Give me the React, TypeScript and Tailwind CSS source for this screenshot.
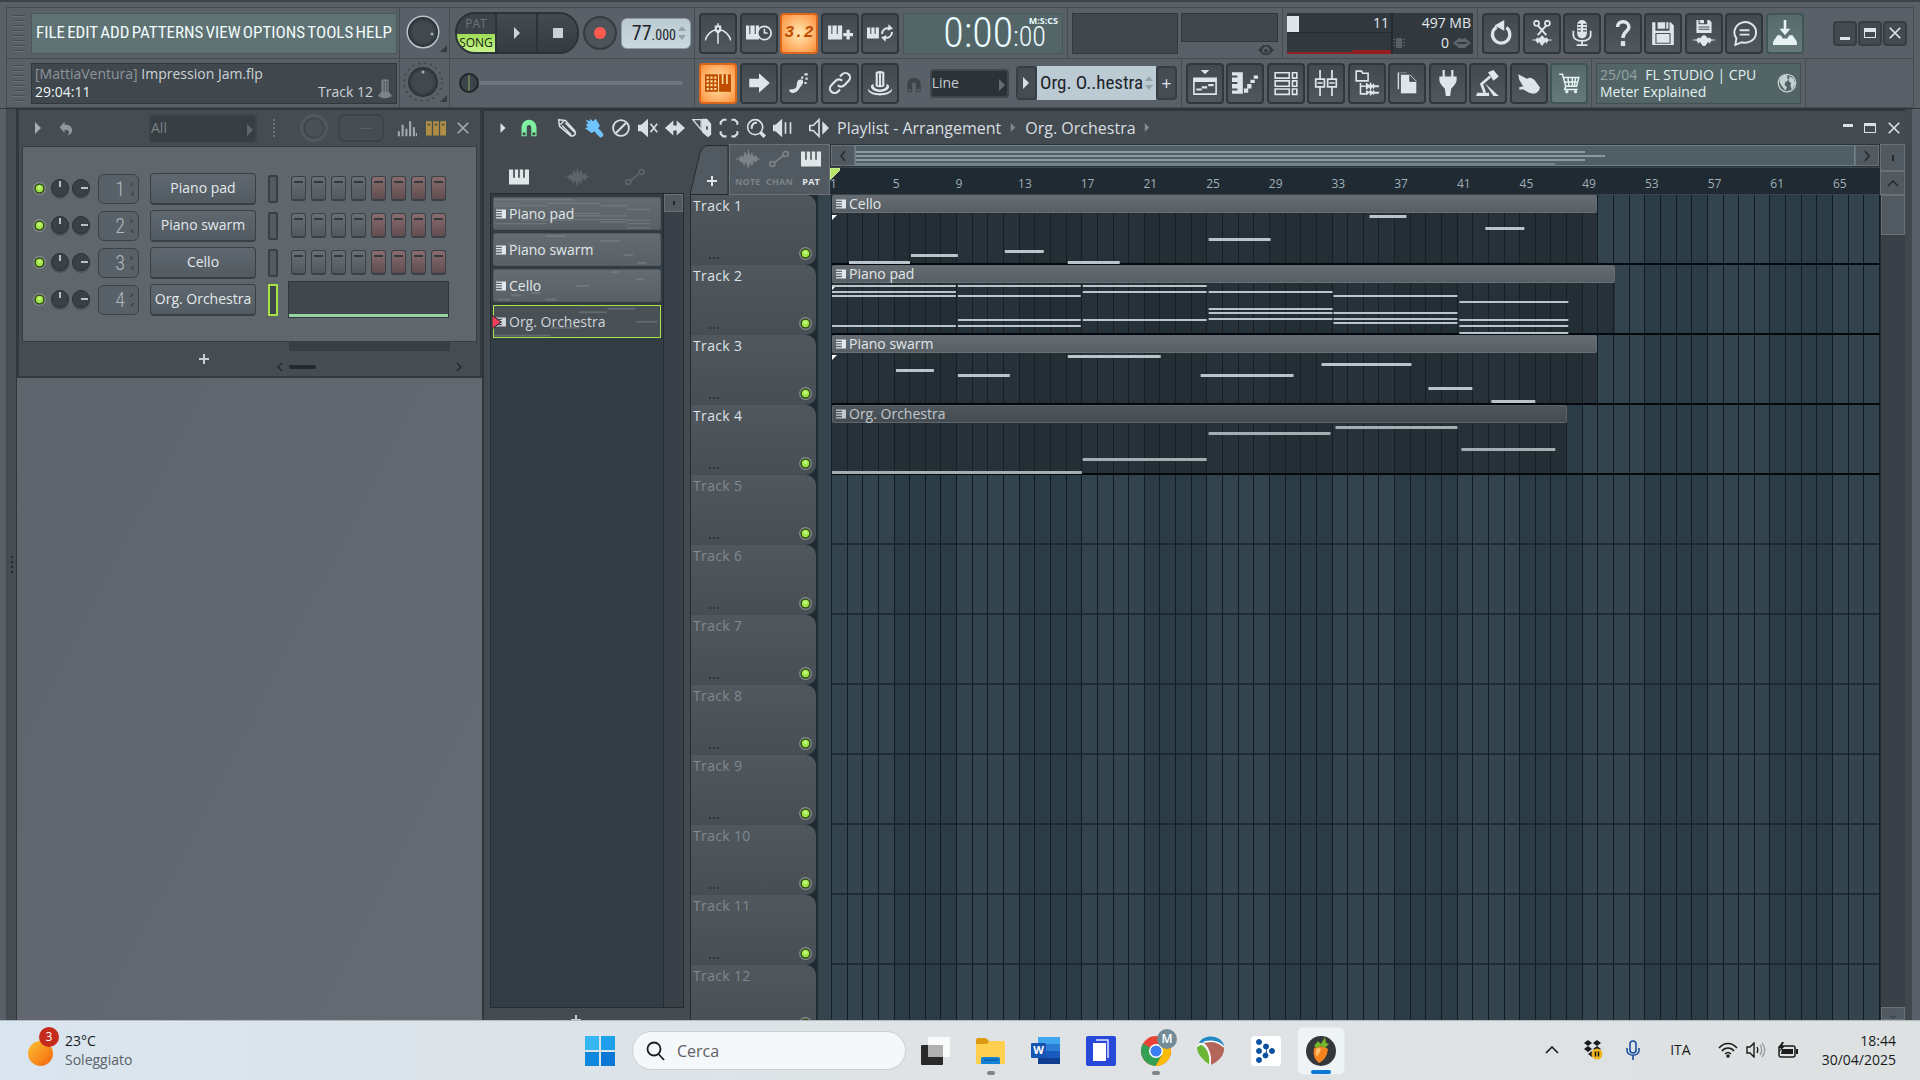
import React from "react";
import clsx from "clsx";

const narrow =
  "font-['Roboto_Condensed','Liberation_Sans_Narrow','DejaVu_Sans_Condensed',sans-serif] whitespace-nowrap";
const sans = "font-['Open_Sans',sans-serif]";

const icons: Record<string, React.ReactNode> = {
  metronome: (
    <>
      <path d="M0 19C2 13 6 10 10 9M24 19C22 13 18 10 14 9" fill="none" stroke="currentColor" strokeWidth="1.500" />
      <path d="M9 5h6v5l-2 2h-2l-2-2zM11.300 3h1.400v19h-1.400z" />
      <path d="M11 7h2v2h-2z" fill="#3c444a" />
    </>
  ),
  keysClock: (
    <>
      <path d="M0 5h3v8h1V5h4v8h1V5h3v13H0z" />
      <circle cx="17" cy="12" r="6.2" fill="#454d53" stroke="currentColor" strokeWidth="1.6" />
      <path d="M17 8v4h3" fill="none" stroke="currentColor" strokeWidth="1.4" />
    </>
  ),
  keysPlus: (
    <path d="M1 5h3v8h1V5h4v8h1V5h4v13H1zM18 9h3v3h3v3h-3v3h-3v-3h-3v-3h3z" />
  ),
  keysLoop: (
    <>
      <path d="M0 7h3v6h1V7h3v6h1V7h3v10H0z" />
      <path d="M14 13a5 5 0 0 1 7-5M23 11a5 5 0 0 1-7 5" fill="none" stroke="currentColor" strokeWidth="1.800" />
      <path d="M20 4l4 4-5 2zM17 20l-4-4 5-2z" />
    </>
  ),
  gridKeys: (
    <>
      <path d="M0 4h12v16H0zM13 4h11v16H13z" />
      <path d="M1.500 6h2v2h-2zM5 6h2v2H5zM8.500 6h2v2h-2zM1.500 9.500h2v2h-2zM5 9.500h2v2H5zM8.500 9.500h2v2h-2zM1.500 13h2v2h-2zM5 13h2v2H5zM8.500 13h2v2h-2zM1.500 16.500h2v2h-2zM5 16.500h2v2H5zM8.500 16.500h2v2h-2zM15.500 4h1.500v9h-1.500zM19.500 4H21v9h-1.500z" fill="#ffe09a" />
    </>
  ),
  arrow: <path d="M3 8h9V3l10 9-10 9v-5H3z" />,
  step: (
    <>
      <path d="M4 18c4 0 6-1 6-5 0-3 2-5 5-4 2 2 0 5-2 7-2 4-5 6-8 5-2-1-3-3-1-3z" />
      <path d="M14 6h2v2h-2zM17 3h3v2h-3zM18 7h2v2h-2zM17 11h2v2h-2z" />
    </>
  ),
  link: (
    <path d="M10 14a4 4 0 0 0 6 0l4-4a4 4 0 0 0-6-6l-2 2M14 10a4 4 0 0 0-6 0l-4 4a4 4 0 0 0 6 6l2-2" fill="none" stroke="currentColor" strokeWidth="2" />
  ),
  knobPot: (
    <>
      <path d="M8 2q4-2 8 0v13q-4 2-8 0z" />
      <path d="M10.500 3v11M13.500 3v11" stroke="#41494f" strokeWidth="1" />
      <path d="M6 13v2c2 4 10 4 12 0v-2c3 1 3 3 1 5-3 3-11 3-14 0-2-2-2-4 1-5zM1 17c3 6 19 6 22 0v2c-3 6-19 6-22 0z" />
    </>
  ),
  playlist: (
    <>
      <path d="M8 0h8l-4 4z" />
      <path d="M1 7h22v16H1zM2.500 11v10.500h19V11z" fillRule="evenodd" />
      <path d="M4 17h5v2H4zM9 15h5v2H9zM15 13h5v2h-5z" />
    </>
  ),
  pianoRoll: (
    <path d="M0 2h10v20H0v-3h5v-2H0v-4h5v-2H0V7h5V5H0zM11 17h4v4h-4zM14 13h4v4h-4zM17 9h4v3h-4zM20 5h4v3h-4z" />
  ),
  channelRack: (
    <path d="M2 2.500h13v5H2zM2 10h13v5H2zM2 17.500h13v5H2zM18 2.500h4v5h-4zM18 10h4v5h-4zM18 17.500h4v5h-4z" fill="none" stroke="currentColor" strokeWidth="1.500" />
  ),
  mixer: (
    <path d="M6.500 0v8M6.500 16v8M17.500 0v8M17.500 16v8M2.500 8.500h8v7h-8zM13.500 8.500h8v7h-8zM4 12h5M15 12h5" fill="none" stroke="currentColor" strokeWidth="1.600" />
  ),
  browser: (
    <>
      <path d="M2 1h5l1 2h5v7H2zM6 12v10h5M6 15h5" fill="none" stroke="currentColor" strokeWidth="1.500" />
      <path d="M11 12h1l2 2 1-3 2 3 1-2 1 2h4v2h-4l-1 2-1-2-2 3-1-3-2 2h-1zM11 19h1l2 1 1-2 2 2 1-2 1 2h4v2h-4l-1 1-1-1-2 2-1-3-2 2h-1z" />
    </>
  ),
  files: <path d="M3 2h9v1H5v15H3zM6 4h9l6 6v12H6zM14.500 4.500v6h6" stroke="#454d53" strokeWidth="0.700" />,
  plug: <path d="M7 0h2v6h6V0h2v6h3v3c0 3-2 5-5 8l-1 7h-4l-1-7c-3-3-5-5-5-8V6h3z" />,
  lamp: (
    <>
      <path d="M12 2l5-2 5 6-5 4z" />
      <path d="M14 6L6 13l3 8" fill="none" stroke="currentColor" strokeWidth="2.500" />
      <path d="M9 12l13 12h-5zM2 21h11v3H1z" />
    </>
  ),
  hand: <path d="M2 4l8 4 3-1 4 2 2 3 3 4c0 3-3 6-6 6l-4-1-5-3-4 0 0-2 4-1-1-1-3-5z" />,
  cart: (
    <>
      <path d="M3 4h3l3 11h10l2-8H7M8 11h12M11 7l1 8M15 7v8M18 7l-1 8M9 15l-1 3h12" fill="none" stroke="currentColor" strokeWidth="1.400" />
      <circle cx="10" cy="20" r="1.500" />
      <circle cx="18" cy="20" r="1.500" />
    </>
  ),
  undo: (
    <>
      <path d="M8 6.500a8 8 0 1 0 9 .5" fill="none" stroke="currentColor" strokeWidth="3" />
      <path d="M6 5l9-5v10z" />
    </>
  ),
  cut: (
    <>
      <path d="M8 5l8 9M16 5l-8 9" stroke="currentColor" strokeWidth="1.800" />
      <circle cx="7" cy="3" r="2.300" fill="none" stroke="currentColor" strokeWidth="1.600" />
      <circle cx="17" cy="3" r="2.300" fill="none" stroke="currentColor" strokeWidth="1.600" />
      <path d="M3 18h3l2-2 1 1 3-3 3 3 1-1 2 2h3v1h-3l-2 3-1-2-3 4-3-4-1 2-2-3H3z" />
    </>
  ),
  mic: (
    <>
      <rect x="7.500" y="0" width="9" height="17" rx="4.500" />
      <path d="M4 10v4c0 7 16 7 16 0v-4M12 19v4M7 23.200h10" fill="none" stroke="currentColor" strokeWidth="1.600" />
      <path d="M8 4h3M13 4h3M8 7h3M13 7h3M8 10h3M13 10h3" stroke="#454d53" strokeWidth="1" />
    </>
  ),
  help: (
    <>
      <path d="M7 6.500c0-7 10.500-6 10.500 0 0 4-5.500 4-5.500 10" fill="none" stroke="currentColor" strokeWidth="3.200" />
      <path d="M10 19.500h4V24h-4z" />
    </>
  ),
  save: <path d="M2 2h3v8h13V2h1l3 3v18H2zM7 2h7v6H7zM15 2h2v6h-2zM5 12v10h14V12z M6 13h12v8H6z" fillRule="evenodd" />,
  saveWave: (
    <>
      <path d="M5 0h2v4h8V0h2l2 2v10H5zM8 0h4v3H8zM7 6h10v1H7zM7 8h10v1H7z" fillRule="evenodd" />
      <path d="M2 18h3l2-2 1 1 3-3h2l3 3 1-1 2 2h3v1h-3l-2 3-1-2-3 4h-2l-3-4-1 2-2-3H2z" />
    </>
  ),
  chat: (
    <path d="M4 23l1-6A10 9.500 0 1 1 10 20.500zM8 9.500h9M8 13.500h9" fill="none" stroke="currentColor" strokeWidth="1.800" />
  ),
  download: (
    <path d="M10.800 0h2.400v8H17l-5 6-5-6h3.800zM5 14h3l2 3h4l2-3h3l4 6v3H1v-3z" />
  ),
  undoArrow: <path d="M9 1v5c8 0 12 3 12 9 0 4-3 7-8 8 5-3 4-9-4-9v5L1 10z" />,
  bars: <path d="M1 16h2.500v6H1zM5.500 8H8v14H5.500zM10 13h2.500v9H10zM14.500 4H17v18h-2.500zM19 11h2.500v11H19zM22.500 18H24v4h-1.500z" />,
  cells: <path d="M0 4h7v17H0zM8.500 4h7v17h-7zM17 4h7v17h-7zM2 7v2h3V7zM10.500 7v2h3V7zM19 7v2h3V7z" fillRule="evenodd" />,
  close: <path d="M3 3l18 18M21 3L3 21" stroke="currentColor" strokeWidth="3" />,
  magnet: (
    <path d="M2 23V11a10 10 0 0 1 20 0v12h-7V11a3 3 0 0 0-6 0v12zM3.500 18v3.500h4V18zM16.500 18v3.500h4V18z" fillRule="evenodd" />
  ),
  pencil: (
    <path d="M2 2l8 1 11 12c3 4-1 8-5 6L3 10zM6 9l11 11M8 4L4 8M10 6l11 11" fill="none" stroke="currentColor" strokeWidth="1.800" />
  ),
  paint: (
    <path d="M2 2l5 2 0-3 4 3 3-3 5 8-2 4 2 1 4 5c1 3-2 5-4 4l-5-5-1-2-4 2-8-6 4-1-3-3 3-1z" />
  ),
  deny: (
    <>
      <circle cx="12" cy="12" r="9.500" fill="none" stroke="currentColor" strokeWidth="2.200" />
      <path d="M6 18L18 6" stroke="currentColor" strokeWidth="2.500" />
    </>
  ),
  mute: (
    <>
      <path d="M0 8h4l8-7v22l-8-7H0z" />
      <path d="M15 7l8 10M23 7l-8 10" stroke="currentColor" strokeWidth="2" />
    </>
  ),
  slip: <path d="M0 12l10-9v6h4V3l10 9-10 9v-6h-4v6z" />,
  slice: (
    <>
      <path d="M1 2h10v12z" fill="none" stroke="currentColor" strokeWidth="1.600" />
      <path d="M12 1h6l5 6v13l-4 3-7-6zM17 10v4h2v-4z" fillRule="evenodd" />
    </>
  ),
  selectBox: (
    <path d="M2 8V5l3-3h4M15 2h4l3 3v3M22 16v3l-3 3h-4M9 22H5l-3-3v-3" fill="none" stroke="currentColor" strokeWidth="2.500" />
  ),
  magnify: (
    <>
      <circle cx="11" cy="11" r="9" fill="none" stroke="currentColor" strokeWidth="2" />
      <path d="M7 13c-1-5 3-8 6-7" fill="none" stroke="currentColor" strokeWidth="2.500" />
      <path d="M16 19l3-3 5 5-3 3z" />
    </>
  ),
  playback: <path d="M0 8h3l8-7v22l-8-7H0zM14 5h2v14h-2zM20 5h2v14h-2z" />,
  speaker: (
    <>
      <path d="M1 9h4l7-7v20l-7-7H1z" fill="none" stroke="currentColor" strokeWidth="2" />
      <path d="M16 4l8 8-8 8z" />
    </>
  ),
  keys: <path d="M0 3h5v10h2V3h4v10h2V3h4v10h2V3h5v18H0z" />,
  wave: (
    <path d="M0 11.500h3l2-3 2 2 2-6 2 4 1.500-7L14 9l2-4 2 5 2-2 2 3.500h2v1h-2l-2 3-2-2-2 6-2-4-1.500 7L10 15l-2 4-2-5-1 2-2-3.500H0z" />
  ),
  auto: (
    <>
      <circle cx="4" cy="18" r="3" fill="none" stroke="currentColor" strokeWidth="2" />
      <circle cx="20" cy="6" r="3" fill="none" stroke="currentColor" strokeWidth="2" />
      <path d="M7 16L17 8" stroke="currentColor" strokeWidth="2" />
    </>
  ),
  plus: <path d="M10 2h4v8h8v4h-8v8h-4v-8H2v-4h8z" />,
  clipKeys: (
    <path d="M0 1h24v22H0v-3h14v-4H0v-3h14v-3H0V7h14V4H0z" />
  ),
  globe: (
    <>
      <circle cx="12" cy="12" r="10.500" fill="none" stroke="currentColor" strokeWidth="1.500" />
      <path d="M4 6l5-4 4 1-1 3 2 2-4 3-1 3 3 3-2 4-4-5-3-5zM15 4l5 3 2 6-4 7-2-5 1-3-3-2z" />
    </>
  ),
};

const Icon = ({ name, className = "size-6" }: { name: string; className?: string }) => (
  <svg viewBox="0 0 24 24" fill="currentColor" className={clsx("shrink-0", className)} aria-hidden="true">
    {icons[name]}
  </svg>
);

const Tri = ({ className }: { className?: string }) => (
  <svg viewBox="0 0 6 12" fill="currentColor" className={clsx("h-3 w-[6px] shrink-0", className)} aria-hidden="true">
    <path d="M0 0l6 6-6 6z" />
  </svg>
);

const ToolButton = ({ icon, tone = "dark", children }: { icon: string; tone?: string; children?: React.ReactNode }) => (
  <button
    aria-label={icon}
    className={clsx(
      "flex h-[41px] w-[38px] shrink-0 items-center justify-center rounded-sm border-2",
      tone === "dark" && "border-[#30383e] bg-linear-to-b from-[#42494f] to-[#50585e] text-[#dfe5e8]",
      tone === "hot" && "border-[#d9681c] bg-radial from-[#ffe9b0] to-[#ff8d33] text-[#c04c00]",
      tone === "teal" && "border-[#3f5558] bg-linear-to-b from-[#566a6c] to-[#66797a] text-[#e6f3f2]"
    )}
  >
    {children ?? <Icon name={icon} className="size-[26px]" />}
  </button>
);

const Grip = () => (
  <div className="flex w-6 shrink-0 flex-col items-center gap-[3px]">
    {Array.from({ length: 8 }, (_, i) => (
      <span key={i} className="h-[2px] w-3 border-t border-[#454c52] bg-[#687077]" />
    ))}
  </div>
);

const Cell = ({ className, children }: { className?: string; children?: React.ReactNode }) => (
  <div className={clsx("flex h-full shrink-0 items-center border-r border-[#454c52]", className)}>{children}</div>
);

const MainKnob = ({ ring }: { ring: boolean }) => (
  <svg viewBox="0 0 44 44" className="size-11" aria-hidden="true">
    {ring ? (
      <circle cx="20" cy="21" r="15.500" fill="none" stroke="#b9c8d0" strokeWidth="2" />
    ) : (
      <circle cx="20" cy="21" r="19" fill="none" stroke="#41484e" strokeWidth="2" strokeDasharray="2 4" />
    )}
    <circle cx="20" cy="21" r="14" fill="#394147" stroke="#2d343a" strokeWidth="2" />
    <circle cx="20" cy="21" r="11" fill="#41494f" />
    <circle cx={ring ? 29 : 20} cy={ring ? 23 : 11} r="1.500" fill="#9fb0b8" />
    <path d="M44 34v7h-7z" fill="#353c42" />
  </svg>
);

const menus = ["FILE", "EDIT", "ADD", "PATTERNS", "VIEW", "OPTIONS", "TOOLS", "HELP"];

const Toolbar = () => (
  <header className="shrink-0 border-t-2 border-[#3b4248] bg-[#596067] px-[6px] pt-[5px]">
    <div className="flex h-[51px] items-center border border-b-0 border-[#454c52]">
      <Cell className="w-[393px]">
        <Grip />
        <nav className={clsx("flex h-[41px] w-[366px] items-center justify-between border border-[#49595b] bg-[#5f7274] px-1 text-[17px] text-[#f0fbfb]", narrow)}>
          {menus.map((m) => (
            <button key={m}>{m}</button>
          ))}
        </nav>
      </Cell>
      <Cell className="w-[50px] justify-center">
        <MainKnob ring />
      </Cell>
      <Cell className="w-[245px] gap-1 pl-[5px]">
        <div className="flex h-[42px] w-[124px] overflow-hidden rounded-[20px] border-2 border-[#2c3338] bg-[#3c444a]">
          <div className="flex w-[38px] flex-col text-center text-xs">
            <button className={clsx("h-5 text-[#6b747a]", sans)}>PAT</button>
            <button className={clsx("flex-1 bg-linear-to-b from-[#9fdc55] to-[#c6f58a] text-[#20280f]", sans)}>SONG</button>
          </div>
          <button aria-label="Play" className="flex flex-1 items-center justify-center border-l-2 border-[#2c3338] bg-linear-to-b from-[#434b51] to-[#343b41]">
            <Tri className="text-[#cfd6da]" />
          </button>
          <button aria-label="Stop" className="flex flex-1 items-center justify-center border-l-2 border-[#2c3338] bg-linear-to-b from-[#434b51] to-[#343b41]">
            <span className="size-[10px] bg-[#c9cfd4]" />
          </button>
        </div>
        <button aria-label="Record" className="flex h-[34px] w-[34px] items-center justify-center rounded-full border-2 border-[#343b41] bg-[#4c545a]">
          <span className="size-3 rounded-full bg-[#ff5a50]" />
        </button>
        <div className="flex h-[31px] w-[70px] items-center justify-end rounded-md border border-[#8d9ca4] bg-linear-to-b from-[#bccbd3] to-[#cbd8de] pr-1">
          <span className={clsx("text-xl text-[#1d2429]", narrow)}>77</span>
          <span className={clsx("pt-1 text-sm text-[#1d2429]", narrow)}>.000</span>
          <svg viewBox="0 0 8 14" className="ml-[2px] h-[14px] w-2" fill="#93a2aa"><path d="M4 0l4 5H0zM4 14l4-5H0z" /></svg>
        </div>
      </Cell>
      <Cell className="w-[373px] justify-between px-1">
        <div className="flex w-[200px] justify-between">
          <ToolButton icon="metronome" />
          <ToolButton icon="keysClock" />
          <ToolButton icon="count in" tone="hot">
            <span className="font-['Liberation_Mono',monospace] text-base font-bold italic">3.2</span>
          </ToolButton>
          <ToolButton icon="keysPlus" />
          <ToolButton icon="keysLoop" />
        </div>
        <div className={clsx("relative flex h-[41px] w-[160px] items-center justify-end border border-[#455759] bg-[#536567] pr-4 text-[#eafcff]", narrow)}>
          <span className="text-[42px] leading-10 font-light">0:00</span>
          <span className="pt-2 text-[28px] leading-8 font-light">:00</span>
          <span className={clsx("absolute top-0 right-1 text-[9px] font-bold", sans)}>M:S:CS</span>
        </div>
      </Cell>
      <Cell className="w-[215px] items-start gap-[3px] px-1 pt-[5px]">
        <div className="h-[41px] w-[107px] border border-[#31383e] bg-[#40474d]" />
        <div className="flex flex-col items-end">
          <div className="h-[29px] w-[97px] border border-[#31383e] bg-[#40474d]" />
          <svg viewBox="0 0 16 12" className="mr-1 mt-[2px] h-3 w-4" fill="#353c42">
            <path d="M0 6l5-5h6l5 5-5 5H5z" />
            <circle cx="8" cy="6" r="3.500" fill="#596067" />
            <circle cx="8" cy="7" r="2" />
          </svg>
        </div>
      </Cell>
      <Cell className="w-[195px] px-1">
        <div className={clsx("flex h-[41px] w-[186px] bg-[#242b31] text-sm leading-5 text-[#e3eaee]", sans)}>
          <div className="relative w-[106px] border-r-2 border-[#242b31] bg-[#31383e]">
            <div className="flex h-5 justify-between border-b border-[#242b31] pr-[2px]">
              <span className="mt-[3px] h-4 w-3 bg-[#dfe6ea]" />
              <span>11</span>
            </div>
            <svg viewBox="0 0 106 4" className="absolute bottom-0 left-0 h-1 w-full">
              <path d="M0 3h66l2-2h38M68 3h38" stroke="#b51616" strokeWidth="1.500" fill="none" />
            </svg>
          </div>
          <div className="relative flex-1 bg-[#31383e] pr-[2px] text-right">
            <div>497 MB</div>
            <div className="flex items-center justify-between">
              <svg viewBox="0 0 12 10" className="h-[10px] w-3" fill="#576067">
                <path d="M3 0h6v10H3zM0 1h2v1H0zM0 4h2v1H0zM0 7h2v1H0zM10 1h2v1h-2zM10 4h2v1h-2zM10 7h2v1h-2z" />
              </svg>
              <span className="flex items-center gap-1">
                0
                <svg viewBox="0 0 18 12" className="h-3 w-[18px]" fill="#5d666d">
                  <path d="M0 6l6-5 3 1 3-1 6 5-6 5H6zM3 6l3 1h6l3-1-3-1H6z" fillRule="evenodd" />
                </svg>
              </span>
            </div>
          </div>
        </div>
      </Cell>
      <div className="flex flex-1 items-center justify-between pr-[6px] pl-1">
        <div className="flex w-[322px] justify-between">
          {["undo", "cut", "mic", "help", "save", "saveWave", "chat"].map((n) => (
            <ToolButton key={n} icon={n} />
          ))}
          <ToolButton icon="download" tone="teal" />
        </div>
        <div className="flex gap-px text-[#dfe5e8]">
          <button aria-label="Minimize" className="flex h-[25px] w-6 items-end justify-center rounded-sm border-2 border-[#363e44] bg-[#434b51] pb-1"><span className="h-[3px] w-[10px] bg-current" /></button>
          <button aria-label="Maximize" className="flex h-[25px] w-6 items-center justify-center rounded-sm border-2 border-[#363e44] bg-[#434b51]"><span className="h-[10px] w-3 border border-t-4 border-current" /></button>
          <button aria-label="Close" className="flex h-[25px] w-6 items-center justify-center rounded-sm border-2 border-[#363e44] bg-[#434b51]"><Icon name="close" className="size-[14px]" /></button>
        </div>
      </div>
    </div>
    <div className="flex h-[50px] items-center border border-[#454c52]">
      <Cell className="w-[393px]">
        <Grip />
        <div className={clsx("flex h-[41px] w-[366px] items-end justify-between border border-[#30373d] bg-[#40474d] px-[3px] text-sm leading-[18px] text-[#ccd3d8]", sans)}>
          <div className="pb-[2px]">
            <div><span className="text-[#8d959b]">[MattiaVentura]</span> Impression Jam.flp</div>
            <div className="text-[#eef3f5]">29:04:11</div>
          </div>
          <div className="flex items-end gap-1">
            <span className="pb-[2px]">Track 12</span>
            <svg viewBox="0 0 18 22" className="mb-1 h-5 w-4" fill="#7c848a"><path d="M5 1q4-2 8 0v13l4 5q-8 5-16 0l4-5z" /><path d="M8 2v12M11 2v12" stroke="#40474d" /></svg>
          </div>
        </div>
      </Cell>
      <Cell className="w-[50px] justify-center">
        <MainKnob ring={false} />
      </Cell>
      <Cell className="w-[245px] px-[9px]">
        <input
          type="range"
          aria-label="Song position"
          defaultValue={0}
          className="h-6 w-[224px] appearance-none bg-transparent [&::-webkit-slider-runnable-track]:h-1 [&::-webkit-slider-runnable-track]:rounded-sm [&::-webkit-slider-runnable-track]:bg-[#6e767d] [&::-webkit-slider-thumb]:-mt-2 [&::-webkit-slider-thumb]:size-5 [&::-webkit-slider-thumb]:appearance-none [&::-webkit-slider-thumb]:rounded-full [&::-webkit-slider-thumb]:border-2 [&::-webkit-slider-thumb]:border-[#1f262b] [&::-webkit-slider-thumb]:bg-linear-to-r [&::-webkit-slider-thumb]:from-[#3c444a] [&::-webkit-slider-thumb]:from-45% [&::-webkit-slider-thumb]:via-[#a8dc50] [&::-webkit-slider-thumb]:to-[#3c444a] [&::-webkit-slider-thumb]:to-55%"
        />
      </Cell>
      <Cell className="w-[487px] justify-between px-1">
        <div className="flex w-[200px] justify-between">
          <ToolButton icon="gridKeys" tone="hot" />
          <ToolButton icon="arrow" />
          <ToolButton icon="step" />
          <ToolButton icon="link" />
          <ToolButton icon="knobPot" />
        </div>
        <Icon name="magnet" className="mt-1 size-4 text-[#3c434a]" />
        <div className="relative">
          <select aria-label="Snap" className={clsx("h-[29px] w-[79px] appearance-none rounded-sm border-2 border-[#3f464c] bg-[#2c3237] text-sm text-[#c6cdd1]", sans)}>
            <option>Line</option>
          </select>
          <Tri className="absolute top-[10px] right-1 h-2 w-1 text-[#656d73]" />
        </div>
        <div className="flex h-[34px] text-[#d8dee2]">
          <button aria-label="Pattern menu" className="flex w-[21px] items-center justify-center rounded-sm border-2 border-[#363e44] bg-[#454d53]"><Tri className="h-2 w-1" /></button>
          <div className={clsx("flex w-[119px] items-center justify-between bg-[#bccbd3] px-[3px] text-[19px] text-[#1d2429]", narrow)}>
            Org. O..hestra
            <svg viewBox="0 0 8 14" className="h-[14px] w-2 shrink-0" fill="#93a2aa"><path d="M4 0l4 5H0zM4 14l4-5H0z" /></svg>
          </div>
          <button className="w-[21px] rounded-sm border-2 border-[#363e44] bg-[#454d53] text-lg leading-none">+</button>
        </div>
      </Cell>
      <Cell className="w-[410px] pl-1">
        <div className="flex w-[402px] justify-between">
          {["playlist", "pianoRoll", "channelRack", "mixer", "browser", "files", "plug", "lamp", "hand"].map((n) => (
            <ToolButton key={n} icon={n} />
          ))}
          <ToolButton icon="cart" tone="teal" />
        </div>
      </Cell>
      <Cell className="w-[214px] px-1">
        <div className={clsx("flex h-[41px] w-[206px] items-center justify-between border border-[#3f5153] bg-[#536466] px-[3px] text-sm leading-[17px] text-[#e2f1f1]", sans)}>
          <div>
            <div><span className="mr-2 text-[#94a5a6]">25/04</span>FL STUDIO | CPU</div>
            <div>Meter Explained</div>
          </div>
          <Icon name="globe" className="size-5 text-[#c2d0d0]" />
        </div>
      </Cell>
    </div>
  </header>
);

const Led = () => (
  <svg viewBox="0 0 13 13" className="size-[13px] shrink-0" aria-hidden="true">
    <circle cx="6.500" cy="6.500" r="5.800" fill="#2f4a14" stroke="#868f94" strokeWidth="1.200" />
    <circle cx="6.500" cy="6.500" r="3.700" fill="#a0e64a" />
    <circle cx="6.500" cy="5.500" r="1.800" fill="#c4fa7c" />
  </svg>
);

const SmallKnob = ({ pan }: { pan?: boolean }) => (
  <svg viewBox="0 0 20 22" className="h-[22px] w-5 shrink-0" aria-hidden="true">
    <circle cx="10" cy="12" r="9" fill="#4a5258" />
    <circle cx="10" cy="10" r="8.500" fill="#394147" stroke="#2b3237" />
    {pan ? <path d="M10 10h7" stroke="#b8c1c6" strokeWidth="2" /> : <path d="M10 3v6" stroke="#b8c1c6" strokeWidth="2" />}
  </svg>
);

const channels = ["Piano pad", "Piano swarm", "Cello", "Org. Orchestra"];

const ChannelRack = () => (
  <section className="border-2 border-t border-[#33393f] bg-[#454d53]">
    <div className="flex h-9 items-center text-[#8e979d]">
      <Tri className="ml-4 text-[#a4adb2]" />
      <Icon name="undoArrow" className="ml-[18px] size-[15px]" />
      <div className="relative ml-[75px]">
        <select aria-label="Channel filter" className={clsx("h-[29px] w-[108px] appearance-none rounded-sm border-2 border-[#3d4449] bg-[#373e42] text-sm text-[#798186]", sans)}>
          <option>All</option>
        </select>
        <Tri className="absolute top-[10px] right-1 h-2 w-1 text-[#5e676d]" />
      </div>
      <span className="ml-4 h-[18px] border-l-2 border-dotted border-[#6c757b]" />
      <svg viewBox="0 0 30 30" className="ml-6 size-[30px]"><circle cx="15" cy="15" r="12.500" fill="none" stroke="#515960" strokeWidth="3" /><circle cx="15" cy="15" r="9.500" fill="#4a5258" stroke="#394047" /></svg>
      <div className="ml-[9px] flex h-7 w-[46px] items-center justify-end rounded-md border-2 border-[#3c444a] pr-[10px] text-xs text-[#5e676d]">---</div>
      <Icon name="bars" className="ml-[13px] size-5 text-[#a2abb0]" />
      <Icon name="cells" className="ml-[9px] size-5 text-[#b08d45]" />
      <Icon name="close" className="ml-[10px] size-[14px] text-[#a4adb2]" />
    </div>
    <div className="mx-[3px] flex h-[196px] flex-col justify-center gap-[5px] border border-[#363d43] bg-[#5f676d] pl-[10px]">
      {channels.map((name, i) => (
        <div key={name} className="flex h-8 items-center">
          <Led />
          <span className="ml-1 flex gap-px">
            <SmallKnob />
            <SmallKnob pan />
          </span>
          <div className={clsx("ml-[7px] flex h-[30px] w-[41px] items-center justify-end gap-1 rounded-md border border-[#3b4349] bg-[#596168] pr-1 text-xl font-light text-[#b0b8bd]", narrow)}>
            {i + 1}
            <svg viewBox="0 0 4 14" className="ml-px h-[14px] w-1" fill="none" stroke="#363e44"><path d="M0 0l3 2-3 2M4 10l-3 2 3 2" /></svg>
          </div>
          <button className={clsx("ml-[11px] h-8 w-[106px] rounded-sm border border-b-2 border-[#384046] bg-linear-to-b from-[#60686f] to-[#535b62] text-sm text-[#e3e9ec]", sans)}>{name}</button>
          <span className={clsx("ml-3 w-[10px] border-2", i === 3 ? "h-8 border-[#a6e343] bg-[#3e464c]" : "h-7 rounded-xs border-[#373f45] bg-[#535b61]")} />
          {i === 3 ? (
            <div className="ml-[10px] h-[37px] w-[161px] border border-[#30383e] bg-[#40474d] pt-8">
              <div className="h-[3px] bg-[#97d3a2]" />
            </div>
          ) : (
            <div className="ml-[13px] flex gap-[5px]">
              {Array.from({ length: 8 }, (_, s) => (
                <button
                  key={s}
                  aria-label={`${name} step ${s + 1}`}
                  className={clsx("flex h-[25px] w-[15px] justify-center rounded-[3px] border border-b-2 border-[#394147] bg-linear-to-b pt-1", s < 4 ? "from-[#687076] to-[#525a60]" : "from-[#8a6c6d] to-[#614d50]")}
                >
                  <span className="h-[2px] w-[9px] bg-[#333a3f]" />
                </button>
              ))}
            </div>
          )}
        </div>
      ))}
    </div>
    <div className="flex h-[34px] items-center">
      <button aria-label="Add channel" className="ml-[179px]"><Icon name="plus" className="size-3 text-[#c8ced2]" /></button>
      <div className="relative ml-auto flex h-full w-[202px] flex-col pr-[30px] pl-[11px]">
        <div className="h-[9px] bg-[#373e44]" />
        <div className="mt-[14px] h-1 w-[27px] rounded-full bg-[#23292e]" />
        <svg viewBox="0 0 6 10" className="absolute bottom-1 -left-px h-[10px] w-[6px]" fill="none" stroke="#23292e" strokeWidth="1.500"><path d="M5 1L1 5l4 4" /></svg>
        <svg viewBox="0 0 6 10" className="absolute right-[18px] bottom-1 h-[10px] w-[6px]" fill="none" stroke="#23292e" strokeWidth="1.500"><path d="M1 1l4 4-4 4" /></svg>
      </div>
    </div>
  </section>
);

// x, width and y of each note inside a clip, on a 1049 x 70 lane
type Note = [number, number, number];
type Clip = { name: string; width: number; thick: number; notes: Note[]; looped: boolean };

const clips: Clip[] = [
  {
    name: "Cello", width: 766, thick: 3, looped: true,
    notes: [[17, 62, 66], [79, 48, 59], [173, 40, 55], [236, 53, 66], [377, 63, 43], [538, 38, 20], [654, 40, 32]],
  },
  {
    name: "Piano pad", width: 784, thick: 2, looped: true,
    notes: [
      [0, 125, 20], [0, 125, 26], [0, 125, 30], [0, 125, 60],
      [126, 124, 20], [126, 124, 30], [126, 124, 54], [126, 124, 60],
      [251, 125, 20], [251, 125, 26], [251, 125, 54],
      [377, 125, 26], [377, 125, 43], [377, 125, 47], [377, 125, 53],
      [502, 125, 30], [502, 125, 47], [502, 125, 53], [502, 125, 57],
      [628, 110, 36], [628, 110, 54], [628, 110, 60], [628, 110, 67],
    ],
  },
  {
    name: "Piano swarm", width: 766, thick: 3, looped: true,
    notes: [[64, 39, 34], [126, 53, 39], [236, 94, 20], [369, 94, 39], [490, 91, 28], [597, 45, 52], [660, 45, 65]],
  },
  {
    name: "Org. Orchestra", width: 736, thick: 3, looped: false,
    notes: [[0, 251, 66], [251, 125, 53], [377, 123, 27], [504, 123, 21], [630, 95, 43]],
  },
];

const ClipNotes = ({ clip, className, top = 0 }: { clip: Clip; className?: string; top?: number }) => (
  <svg viewBox={`0 ${top} ${clip.width} ${70 - top}`} preserveAspectRatio="none" className={className} fill="currentColor" aria-hidden="true">
    {clip.notes.map(([x, w, y], i) => (
      <rect key={i} x={x} y={y} width={w - 1} height={clip.thick} />
    ))}
  </svg>
);

const ClipView = ({ clip }: { clip: Clip }) => (
  <div className="relative h-full bg-[#1d2328]/55" style={{ width: `${(clip.width / 1049) * 100}%` }}>
    <div className={clsx("flex h-[18px] items-center gap-[3px] rounded-xs border border-[#6a7278]/60 pl-[3px] text-sm leading-none", sans, clip.looped ? "bg-linear-to-b from-[#656c72] to-[#575f65] text-[#e1e7ea]" : "bg-linear-to-b from-[#4e555b] to-[#444b51] text-[#c2c9cd]")}>
      <Icon name="clipKeys" className="h-3 w-[10px]" />
      {clip.name}
    </div>
    {clip.looped && (
      <svg viewBox="0 0 5 5" className="absolute top-5 left-0 size-[5px]"><path d="M0 0h5L0 5z" fill="#fff" /></svg>
    )}
    <ClipNotes clip={clip} className={clsx("absolute top-0 left-0 h-[70px] w-full", clip.looped ? "text-[#b9c5ca]" : "text-[#a3adb2]")} />
  </div>
);

const pickerOrder = [clips[1], clips[2], clips[0], clips[3]];

const PatternPicker = () => (
  <div className="flex w-[206px] shrink-0 flex-col pl-[6px]">
    <div className="flex h-[49px] items-center gap-9 pt-4 pl-[19px] text-[#5d656b]">
      <Icon name="keys" className="size-5 text-[#e0e5e8]" />
      <Icon name="wave" className="size-6" />
      <Icon name="auto" className="size-5" />
    </div>
    <div className="flex w-[194px] flex-1 border border-[#252c31] bg-[#323c45]">
      <ul className="flex flex-1 flex-col gap-[3px] px-[2px] pt-[3px]">
        {pickerOrder.map((clip) => (
          <li
            key={clip.name}
            className={clsx(
              "relative flex h-[33px] items-center gap-[3px] border pl-[2px] text-sm",
              sans,
              clip.looped ? "rounded-xs border-[#535b61] bg-linear-to-b from-[#646c72] to-[#596167] text-[#e1e7ea]" : "border-[#a6e343] bg-[#495056] text-[#d0d6da]"
            )}
          >
            <ClipNotes clip={clip} top={18} className="absolute inset-0 h-full w-full text-[#8c969c]/40" />
            <Icon name="clipKeys" className="relative h-3 w-[10px]" />
            <span className="relative">{clip.name}</span>
            {!clip.looped && (
              <svg viewBox="0 0 9 14" className="absolute -left-[2px] h-[14px] w-[9px]"><path d="M0 0l9 7-9 7z" fill="#ee3f5a" stroke="#20262a" /></svg>
            )}
          </li>
        ))}
      </ul>
      <div className="w-5 border-l border-[#252c31] bg-[#394047]">
        <div className="flex h-[18px] items-center justify-center border border-[#6a7177] bg-[#525a61]"><span className="h-1 w-[2px] bg-[#23292e]" /></div>
      </div>
    </div>
    <button aria-label="Add pattern" className="flex h-3 w-[172px] justify-center overflow-hidden pt-[6px]"><Icon name="plus" className="size-3 text-[#c8ced2]" /></button>
  </div>
);

const bars = Array.from({ length: 67 }, (_, i) => i + 1);
const tracks = Array.from({ length: 12 }, (_, i) => i + 1);

const Playlist = () => (
  <section className="flex min-w-0 flex-1 flex-col border-t-2 border-l-2 border-[#30373c] bg-[#434a50]">
    <div className={clsx("flex h-[33px] shrink-0 items-center text-[#d9dfe2]", sans)}>
      <Tri className="ml-4 h-[10px] w-[6px]" />
      <Icon name="magnet" className="ml-[14px] size-[18px] text-[#7ff0a0]" />
      <div className="ml-[19px] flex items-center gap-[7px]">
        <Icon name="pencil" className="size-5" />
        <Icon name="paint" className="size-5 text-[#6fc3ff]" />
        <Icon name="deny" className="size-5" />
        <Icon name="mute" className="size-5" />
        <Icon name="slip" className="size-5" />
        <Icon name="slice" className="size-5" />
        <Icon name="selectBox" className="size-5" />
        <Icon name="magnify" className="size-5" />
        <Icon name="playback" className="size-5" />
      </div>
      <Icon name="speaker" className="ml-4 size-5" />
      <h1 className="ml-2 text-base">Playlist - Arrangement</h1>
      <Tri className="mx-[9px] h-[9px] w-[5px] text-[#82898e]" />
      <span className="text-base">Org. Orchestra</span>
      <Tri className="ml-2 h-[9px] w-[5px] text-[#82898e]" />
      <div className="mr-1 ml-auto flex items-center gap-[11px]">
        <button aria-label="Minimize playlist" className="mb-1 h-[3px] w-[10px] bg-current" />
        <button aria-label="Maximize playlist" className="h-[10px] w-3 border border-t-[3px] border-current" />
        <button aria-label="Close playlist"><Icon name="close" className="size-[14px]" /></button>
      </div>
    </div>
    <div className="flex min-h-0 flex-1">
      <PatternPicker />
      <div className="flex min-w-0 flex-1 flex-col">
        <div className="flex h-[51px] shrink-0">
          <div className="relative w-[39px]">
            <svg viewBox="0 0 39 50" className="absolute inset-0 h-full w-full"><path d="M0 50L10 8Q13 1 18 1h20v49z" fill="#525a61" stroke="#252c31" /></svg>
            <button aria-label="Add track" className="absolute bottom-2 left-4"><Icon name="plus" className="size-3 text-[#e0e5e8]" /></button>
          </div>
          <div className={clsx("grid w-[101px] grid-cols-3 place-items-center border border-[#6a7177] bg-[#525a61] px-[2px] pb-1 text-[9px] font-bold tracking-wide text-[#7c848a]", sans)}>
            <Icon name="wave" />
            <Icon name="auto" className="size-5" />
            <Icon name="keys" className="size-5 text-[#e0e5e8]" />
            <span>NOTE</span>
            <span>CHAN</span>
            <span className="text-[#e0e5e8]">PAT</span>
          </div>
          <div className="flex min-w-0 flex-1 flex-col">
            <div className="flex h-[27px] border border-[#2b3238]">
              <button aria-label="Scroll left" className="flex w-6 items-center justify-center border border-[#6a7177] bg-[#525a61]">
                <svg viewBox="0 0 6 12" className="h-3 w-[6px]" fill="none" stroke="#23292e" strokeWidth="1.500"><path d="M5 1L1 6l4 5" /></svg>
              </button>
              <div className="flex-1 border border-[#70808a] bg-[#505f66] pt-[5px]">
                <div className="flex flex-col gap-[2px]">
                  <span className="h-[2px] w-[73%] bg-[#8a989f]" />
                  <span className="h-[2px] w-[75%] bg-[#8a989f]" />
                  <span className="h-[2px] w-[73%] bg-[#8a989f]" />
                  <span className="h-[2px] w-[70%] bg-[#74838a]" />
                </div>
              </div>
              <button aria-label="Scroll right" className="flex w-6 items-center justify-center border border-[#6a7177] bg-[#525a61]">
                <svg viewBox="0 0 6 12" className="h-3 w-[6px]" fill="none" stroke="#23292e" strokeWidth="1.500"><path d="M1 1l4 5-4 5" /></svg>
              </button>
            </div>
            <div className={clsx("relative flex flex-1 border-y border-[#3a444c] bg-[#1f2a32] text-xs leading-5 text-[#9fb0b8]", sans)}>
              {bars.map((b) => (
                <span key={b} className="w-0 flex-1 overflow-visible pt-[6px] whitespace-nowrap">{b % 4 === 1 ? b : ""}</span>
              ))}
              <svg viewBox="0 0 10 12" className="absolute top-0 left-0 h-3 w-[10px]"><path d="M0 0h10v2L0 12z" fill="#b6e567" stroke="#e6f7c0" strokeWidth="0.800" /></svg>
            </div>
          </div>
          <div className="flex w-[25px] flex-col">
            <div className="flex h-[27px] items-center justify-center border border-[#6a7177] bg-[#525a61]"><span className="h-[6px] w-[2px] bg-[#23292e]" /></div>
            <button aria-label="Scroll up" className="flex flex-1 items-center justify-center border border-[#6a7177] bg-[#525a61]">
              <svg viewBox="0 0 12 7" className="h-[7px] w-3" fill="none" stroke="#23292e" strokeWidth="1.500"><path d="M1 6l5-5 5 5" /></svg>
            </button>
          </div>
        </div>
        <div className="flex min-h-0 flex-1 overflow-hidden">
          <div className="w-[128px] shrink-0 border-l border-[#252c31] bg-[#1f2a32] pr-[2px]">
            {tracks.map((t) => (
              <div key={t} className="flex h-[70px] flex-col rounded-r-[10px] border-b border-[#454d53] bg-linear-to-b from-[#50585e] to-[#474f55] pl-[2px]">
                <span className={clsx("text-sm leading-[21px] tracking-wide", sans, t < 5 ? "text-[#dce2e5]" : "text-[#80888d]")}>Track {t}</span>
                <div className="mt-auto flex items-center justify-between pr-1 pb-1 pl-4 text-[#2f363b]">
                  <svg viewBox="0 0 10 2" className="mt-2 h-[2px] w-[10px]" fill="currentColor"><path d="M0 0h2v2H0zM4 0h2v2H4zM8 0h2v2H8z" /></svg>
                  <Led />
                </div>
              </div>
            ))}
          </div>
          <div className="w-[14px] shrink-0 border-r border-[#16222b] bg-[#35434d]" />
          <div className="relative min-w-0 flex-1">
            <div className="absolute inset-0 flex">
              {bars.map((b) => (
                <span key={b} className={clsx("flex-1 border-r border-[#101c25]", Math.floor((b - 1) / 4) % 2 ? "bg-[#2c3c46]" : "bg-[#33444f]")} />
              ))}
            </div>
            <div className="relative">
              {tracks.map((t) => (
                <div key={t} className={clsx("h-[70px] border-b-2", t < 5 ? "border-[#04090d]" : "border-[#14222b]/70")}>
                  {clips[t - 1] && <ClipView clip={clips[t - 1]} />}
                </div>
              ))}
            </div>
          </div>
          <div className="flex w-[25px] shrink-0 flex-col border-l border-[#252c31] bg-[#394047]">
            <div className="h-10 border border-[#6a7177] bg-[#525a61]" />
            <button aria-label="Scroll down" className="mt-auto flex h-[13px] items-end justify-center border border-[#6a7177] bg-[#525a61]">
              <svg viewBox="0 0 12 7" className="h-1 w-3" fill="none" stroke="#23292e" strokeWidth="1.500"><path d="M1 1l5 5 5-5" /></svg>
            </button>
          </div>
        </div>
      </div>
    </div>
  </section>
);

const apps: { name: string; dot?: boolean; art: React.ReactNode }[] = [
  {
    name: "Task view",
    art: (
      <>
        <rect x="1" y="9" width="22" height="20" rx="1" fill="#2a2a2a" />
        <rect x="8" y="1" width="22" height="20" rx="1" fill="#fff" fillOpacity="0.800" />
        <path d="M8 9h15v12H8z" fill="#b0b0b0" />
      </>
    ),
  },
  {
    name: "Explorer",
    dot: true,
    art: (
      <>
        <path d="M1 4q0-2 2-2h8l3 3v5H1z" fill="#dd9a13" />
        <path d="M1 8h11l2-3h15q1 0 1 1v21q0 1-1 1H2q-1 0-1-1z" fill="#ffd04f" />
        <path d="M6 28v-5q0-2 2-2h15q2 0 2 2v5z" fill="#1482d4" />
        <path d="M9 24h14" stroke="#0a4f92" />
      </>
    ),
  },
  {
    name: "Word",
    art: (
      <>
        <path d="M8 1h22v7H8z" fill="#41a5ee" />
        <path d="M8 8h22v7H8z" fill="#2b7cd3" />
        <path d="M8 15h22v7H8z" fill="#185abd" />
        <path d="M8 22h22v6H8z" fill="#103f91" />
        <rect x="1" y="7" width="15" height="15" rx="1" fill="#1755b5" />
        <text x="8.500" y="18" fontSize="11" fontWeight="bold" textAnchor="middle" fill="#fff" fontFamily="Open Sans">W</text>
      </>
    ),
  },
  {
    name: "Reader",
    art: (
      <>
        <rect x="1" width="30" height="30" rx="2" fill="#2748d8" />
        <path d="M11 4h12v18" fill="none" stroke="#dfe6ff" strokeWidth="1.500" />
        <path d="M8 7h13v18H8z" fill="#fff" />
      </>
    ),
  },
  {
    name: "Chrome",
    dot: true,
    art: (
      <>
        <circle cx="16" cy="15" r="15" fill="#ea4335" />
        <path d="M16 15L3 7.500A15 15 0 0 0 15.500 30L22 19z" fill="#34a053" />
        <path d="M16 8h13q2 3 2 7a15 15 0 0 1-15.500 15l6.500-11z" fill="#fbbc04" />
        <circle cx="16" cy="15" r="7" fill="#fff" />
        <circle cx="16" cy="15" r="5.500" fill="#3a7df0" />
      </>
    ),
  },
  {
    name: "Reason",
    art: (
      <>
        <path d="M4 7C8-2 25-2 29 9l-1 3L15 6z" fill="#2389c4" />
        <path d="M4 8q11 4 11 21Q2 20 2 12z" fill="#6cb635" />
        <path d="M9 7q14-3 20 4 1 11-13 18 1-14-7-22z" fill="#b5665a" />
        <path d="M3 10q3-4 7-1 6 6 5 20M9 6q13-3 20 5" fill="none" stroke="#fff" strokeWidth="1.500" />
      </>
    ),
  },
  {
    name: "Dots",
    art: (
      <>
        <rect x="1" width="30" height="30" rx="3" fill="#fff" />
        <g fill="#0a52a0" stroke="#0a52a0">
          <circle cx="9" cy="6" r="2.500" />
          <circle cx="9" cy="15" r="2.500" />
          <circle cx="9" cy="24" r="2.500" />
          <circle cx="16" cy="10.500" r="2.500" />
          <circle cx="15.500" cy="19.500" r="2.500" />
          <circle cx="22" cy="15" r="2.500" />
          <path d="M16 10q1 5 0 9" fill="none" />
        </g>
      </>
    ),
  },
];

const Taskbar = () => (
  <footer className={clsx("relative flex h-[60px] shrink-0 items-center justify-center border-t border-[#b3b9be] bg-linear-to-r from-[#d9e5ef] via-[#dfe3e5] to-[#dde1e2] text-sm text-[#1b1b1b]", sans)}>
    <button className="absolute left-6 flex items-center gap-2 pb-[2px] text-left leading-[19px]">
      <span className="relative size-[33px]">
        <span className="absolute bottom-0 left-1 size-[25px] rounded-full bg-linear-to-br from-[#f9c12f] to-[#f2600d]" />
        <span className="absolute -top-[6px] right-[-2px] size-5 rounded-full bg-[#c42b1c] text-center text-xs leading-5 text-white">3</span>
      </span>
      <span>
        <span className="block">23°C</span>
        <span className="block text-[#5b6167]">Soleggiato</span>
      </span>
    </button>
    <div className="flex items-center pl-[10px]">
      <button aria-label="Start" className="grid size-[30px] grid-cols-2 gap-[2px]">
        <span className="bg-[#35b7f5]" />
        <span className="bg-[#1ea0ec]" />
        <span className="bg-[#0f87dc]" />
        <span className="bg-[#0a78d4]" />
      </button>
      <label className="ml-[17px] flex h-[39px] w-[274px] items-center gap-3 rounded-full border border-[#cbd0d4] bg-[#f5f8fa] pl-3">
        <svg viewBox="0 0 20 20" className="size-5" fill="none" stroke="#1d1d1d" strokeWidth="1.800"><circle cx="9" cy="8" r="6.500" /><path d="M13.500 13L19 19" /></svg>
        <input type="search" placeholder="Cerca" className="w-40 bg-transparent text-base outline-none placeholder:text-[#5d6063]" />
      </label>
      <div className="ml-[2px] flex">
        {apps.map((a) => (
          <button key={a.name} aria-label={a.name} className="relative flex h-12 w-[55px] items-center justify-center">
            <svg viewBox="0 0 32 30" className="h-[30px] w-8">{a.art}</svg>
            {a.dot && <span className="absolute bottom-0 h-1 w-2 rounded-full bg-[#7e8488]" />}
            {a.name === "Chrome" && (
              <span className="absolute top-[2px] right-[6px] size-5 rounded-full bg-[#738b98] text-center text-xs leading-5 font-semibold text-white">M</span>
            )}
          </button>
        ))}
        <button aria-label="FL Studio" className="relative ml-1 flex size-12 items-center justify-center rounded-md border border-[#e3e9ed] bg-[#eef3f6]">
          <svg viewBox="0 0 30 30" className="size-[30px]">
            <circle cx="15" cy="15" r="15" fill="#34373b" />
            <path d="M8 12q8-4 14 1-1 10-9 14-7-5-5-15z" fill="#f5821f" />
            <path d="M10 13q4-2 5 0-2 5-4 8-2-4-1-8z" fill="#ffc06a" />
            <path d="M8 10l4-5 3 3 4-7 1 6 3 1-4 4-4-2-4 2z" fill="#74b82a" />
          </svg>
          <span className="absolute bottom-0 h-1 w-5 rounded-full bg-[#0a78d4]" />
        </button>
      </div>
    </div>
    <div className="absolute right-6 flex items-center pb-[2px]">
      <svg viewBox="0 0 14 8" className="h-2 w-[14px]" fill="none" stroke="#1b1b1b" strokeWidth="1.600"><path d="M1 7l6-6 6 6" /></svg>
      <svg viewBox="0 0 20 20" className="ml-6 size-5">
        <path d="M5 0l4 3-4 3-4-3zM14 0l4 3-4 3-4-3zM5 6l4 3-4 3-4-3zM14 6l4 3-4 3-4-3zM9 11l4 3-4 3-4-3z" fill="#17191b" />
        <circle cx="14" cy="14" r="5.500" fill="#f2b51d" />
        <path d="M12.500 11.500v5M15.500 11.500v5" stroke="#17191b" strokeWidth="1.500" />
      </svg>
      <svg viewBox="0 0 14 20" className="ml-[23px] h-5 w-[14px]" fill="none" stroke="#1d4fa0" strokeWidth="1.600"><rect x="4" y="1" width="6" height="12" rx="3" /><path d="M1 8v2c0 7 12 7 12 0V8M7 15v5" /></svg>
      <span className="ml-[30px]">ITA</span>
      <svg viewBox="0 0 20 16" className="ml-[27px] h-4 w-5" fill="none" stroke="#1b1b1b" strokeWidth="1.500"><path d="M1 6c5-6 13-6 18 0M4 9c3-4 9-4 12 0M7 12c2-2 4-2 6 0" /><circle cx="10" cy="14" r="1" fill="#1b1b1b" /></svg>
      <svg viewBox="0 0 20 16" className="ml-2 h-4 w-5" fill="none" stroke="#1b1b1b" strokeWidth="1.400"><path d="M1 5h3l4-4v14l-4-4H1zM11 5c1 2 1 4 0 6" /><path d="M14 3c2 3 2 7 0 10M16 1c4 5 4 9 0 14" stroke="#9aa0a4" /></svg>
      <svg viewBox="0 0 20 16" className="ml-3 h-4 w-5"><rect x="1" y="4" width="16" height="11" rx="2" fill="none" stroke="#1b1b1b" strokeWidth="1.500" /><path d="M4 7h11v5H3zM18 7h2v5h-2zM4 0L0 6h3L1 10l6-6H4l2-4z" fill="#1b1b1b" /></svg>
      <span className="ml-6 text-right leading-[19px]">
        <span className="block">18:44</span>
        <span className="block">30/04/2025</span>
      </span>
    </div>
  </footer>
);

const App = () => {
  return (
    <div className="flex h-screen min-w-0 flex-col overflow-hidden bg-[#596067]">
      <Toolbar />
      <main className="flex min-h-0 flex-1 border-t border-[#30373c]">
        <div className="flex w-[482px] shrink-0">
          <div className="w-[7px] border-r border-[#41484e] bg-[#596067]" />
          <div className="flex w-[10px] flex-col items-center justify-center gap-[3px] border-r border-[#30373c] bg-[#454d53]">
            {[0, 1, 2, 3].map((i) => (
              <span key={i} className="h-[2px] w-[2px] bg-[#23292e]" />
            ))}
          </div>
          <div className="flex-1 bg-linear-to-br from-[#5c636a] to-[#656b73]">
            <ChannelRack />
          </div>
        </div>
        <Playlist />
        <div className="w-[15px] shrink-0 border-r-8 border-[#596067] bg-[#41484e]" />
      </main>
      <Taskbar />
    </div>
  );
};

export default App;
